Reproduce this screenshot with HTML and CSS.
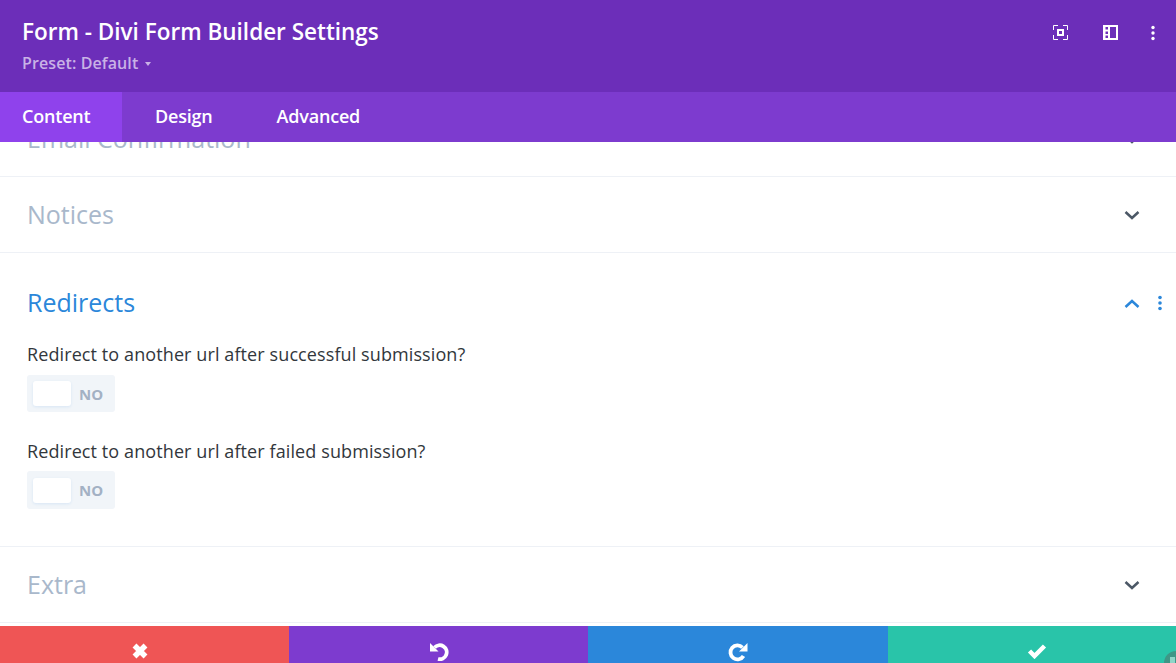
FILE: index.html
```html
<!DOCTYPE html>
<html lang="en">
<head>
<meta charset="UTF-8">
<title>Form - Divi Form Builder Settings</title>
<link rel="stylesheet" href="styles.css">
</head>
<body>

<div class="modal">

  <header class="head">
    <div>
      <div class="head-title">Form - Divi Form Builder Settings</div>
      <div class="head-preset">Preset: Default <span class="caret"></span></div>
    </div>
    <div class="head-icons">
      <svg width="16" height="16" viewBox="0 0 16 16" fill="none" stroke="#fff">
        <path d="M.5 5V.5H5M10 .5H14.500V5M14.500 10V14.500H10M5 14.500H.5V10"/>
        <rect x="4" y="4" width="7" height="7" fill="#fff" stroke="none"/>
        <rect x="6" y="6" width="3" height="3" fill="#6c2eb9" stroke="none"/>
      </svg>
      <svg width="16" height="16" viewBox="0 0 16 16">
        <path fill="#fff" fill-rule="evenodd" d="M0 0H15V15H0ZM2.500 2V4.500H5V2ZM2.500 6.500V9H5V6.500ZM2.500 10.500V13H5V10.500ZM7 2V13H13V2Z"/>
      </svg>
      <svg class="dots" width="4" height="16" viewBox="0 0 4 16" fill="#fff">
        <circle cx="2" cy="2.500" r="1.700"/><circle cx="2" cy="8" r="1.700"/><circle cx="2" cy="13.500" r="1.700"/>
      </svg>
    </div>
  </header>

  <nav class="tabs">
    <div class="tab active">Content</div>
    <div class="tab">Design</div>
    <div class="tab">Advanced</div>
  </nav>

  <div class="body">
    <div class="group group-first">
      <div class="group-row">
        <span class="group-name">Email Confirmation</span>
        <svg class="chev" width="16" height="10" viewBox="0 0 16 10"><path d="M1.500 2 8 8 14.500 2"/></svg>
      </div>
    </div>

    <div class="group">
      <div class="group-row">
        <span class="group-name">Notices</span>
        <svg class="chev" width="16" height="10" viewBox="0 0 16 10"><path d="M1.500 2 8 8 14.500 2"/></svg>
      </div>
    </div>

    <div class="group group-open">
      <div class="group-row">
        <span class="group-name">Redirects</span>
        <svg class="chev" width="16" height="10" viewBox="0 0 16 10"><path d="M1.500 8 8 2 14.500 8"/></svg>
        <svg class="more" width="4" height="16" viewBox="0 0 4 16" fill="#2b87da">
          <circle cx="2" cy="2.500" r="1.800"/><circle cx="2" cy="8" r="1.800"/><circle cx="2" cy="13.500" r="1.800"/>
        </svg>
      </div>
      <div class="field">
        <label class="field-label">Redirect to another url after successful submission?</label>
        <div class="toggle"><span class="knob"></span><span class="toggle-text">NO</span></div>
      </div>
      <div class="field">
        <label class="field-label">Redirect to another url after failed submission?</label>
        <div class="toggle"><span class="knob"></span><span class="toggle-text">NO</span></div>
      </div>
    </div>

    <div class="group">
      <div class="group-row">
        <span class="group-name">Extra</span>
        <svg class="chev" width="16" height="10" viewBox="0 0 16 10"><path d="M1.500 2 8 8 14.500 2"/></svg>
      </div>
    </div>
  </div>

  <footer class="actions">
    <div class="action red">
      <svg width="18" height="18" viewBox="0 0 18 18"><path d="M3.500 3.500 14.500 14.500M14.500 3.500 3.500 14.500" stroke="#fff" stroke-width="5.500" fill="none"/></svg>
    </div>
    <div class="action purple">
      <svg width="20" height="20" viewBox="0 0 20 20" fill="none">
        <path d="M5.500 5.500A7 7 0 1 1 9 17" stroke="#fff" stroke-width="3.800"/>
        <path d="M1 1V9.500H9.500Z" fill="#fff"/>
      </svg>
    </div>
    <div class="action blue">
      <svg width="20" height="20" viewBox="0 0 20 20" fill="none">
        <path d="M14.500 5.500A7 7 0 1 0 15.500 14" stroke="#fff" stroke-width="3.800"/>
        <path d="M19.500 1V9.500H11Z" fill="#fff"/>
      </svg>
    </div>
    <div class="action green">
      <svg width="20" height="16" viewBox="0 0 20 16" fill="none"><path d="M2.500 8 7.500 13 17.500 3" stroke="#fff" stroke-width="4.500"/></svg>
    </div>
  </footer>

  <div class="help-dot"><span class="help-mark"></span></div>
</div>

</body>
</html>
```

FILE: styles.css
```css
* { box-sizing: border-box; margin: 0; padding: 0; }
body { background: #fff; font-family: "Open Sans", Arial, sans-serif; overflow: hidden; }

.modal { display: flex; flex-direction: column; height: 663px; position: relative; overflow: hidden; }

.head { height: 92px; flex: none; background: #6c2eb9; display: flex; justify-content: space-between; padding: 17px 0 0 22px; }
.head-title { color: #fff; font-size: 22.500px; font-weight: 600; line-height: 30px; }
.head-preset { color: #c9b2e6; font-size: 16px; font-weight: 600; line-height: 22px; margin-top: 5px; letter-spacing: .1px; }
.caret { display: inline-block; width: 0; height: 0; border: 3px solid transparent; border-top: 4px solid #c9b2e6; border-bottom: 0; margin-left: 2px; vertical-align: 3px; }
.head-icons { display: flex; align-items: flex-start; padding: 8px 21px 0 0; }
.head-icons svg:first-child { margin-right: 34px; }
.head-icons svg:nth-child(2) { margin-right: 32px; }

.tabs { height: 50px; flex: none; background: #7d3bcf; display: flex; position: relative; z-index: 1; }
.tab { color: #fff; font-size: 18px; font-weight: 600; line-height: 49px; letter-spacing: -.2px; margin-right: 64px; }
.tab.active { background: #8f42ec; width: 122px; padding-left: 22px; margin-right: 33px; }

.body { flex: 1; overflow: hidden; }
.group { border-bottom: 1px solid #eef1f6; }
.group-first { margin-top: -41px; }
.group-row { height: 75px; display: flex; align-items: center; position: relative; padding: 0 36px 0 27px; justify-content: space-between; }
.group-name { color: #a9b8cb; font-size: 25px; line-height: 32px; margin-bottom: 2px; }
.chev { fill: none; stroke: #4c5866; stroke-width: 2.500; }
.more { position: absolute; right: 14px; top: 50%; margin-top: -8px; }

.group-open { height: 294px; }
.group-open .group-row { height: 100px; padding-top: 2px; margin-bottom: -10px; }
.group-open .group-name { color: #2b87da; margin-bottom: 4px; }
.group-open .chev { stroke: #2b87da; }

.field { padding: 0 27px; margin-bottom: 28px; }
.field-label { display: block; color: #32373c; font-size: 18px; font-weight: 500; line-height: 22px; margin-bottom: 10px; letter-spacing: .1px; }
.field + .field .field-label { margin-bottom: 9px; }
.toggle { width: 88px; height: 37px; background: #f1f5f9; border-radius: 3px; display: flex; align-items: center; padding-left: 6px; }
.field + .field .toggle { height: 38px; }
.knob { width: 38px; height: 25px; background: #fff; border-radius: 3px; box-shadow: 0 1px 3px rgba(43,135,218,.12); }
.toggle-text { color: #a3b1c4; font-size: 15px; font-weight: 700; margin-left: 8px; }

.actions { height: 37px; flex: none; display: flex; }
.action { display: flex; align-items: flex-end; justify-content: center; padding-bottom: 1px; }
.red { background: #ef5555; width: 289px; padding-right: 10px; padding-bottom: 3px; }
.purple { background: #7d3bcf; width: 299px; }
.blue { background: #2b87da; width: 300px; }
.green { background: #29c4a9; width: 288px; padding-left: 10px; padding-bottom: 4px; }

.help-dot { position: absolute; left: 1164px; top: 651px; width: 24px; height: 24px; border-radius: 50%; background: #3f9686; }
.help-mark { position: absolute; left: 6px; top: 6px; width: 5px; height: 6px; background: #8fd6c8; }
```
